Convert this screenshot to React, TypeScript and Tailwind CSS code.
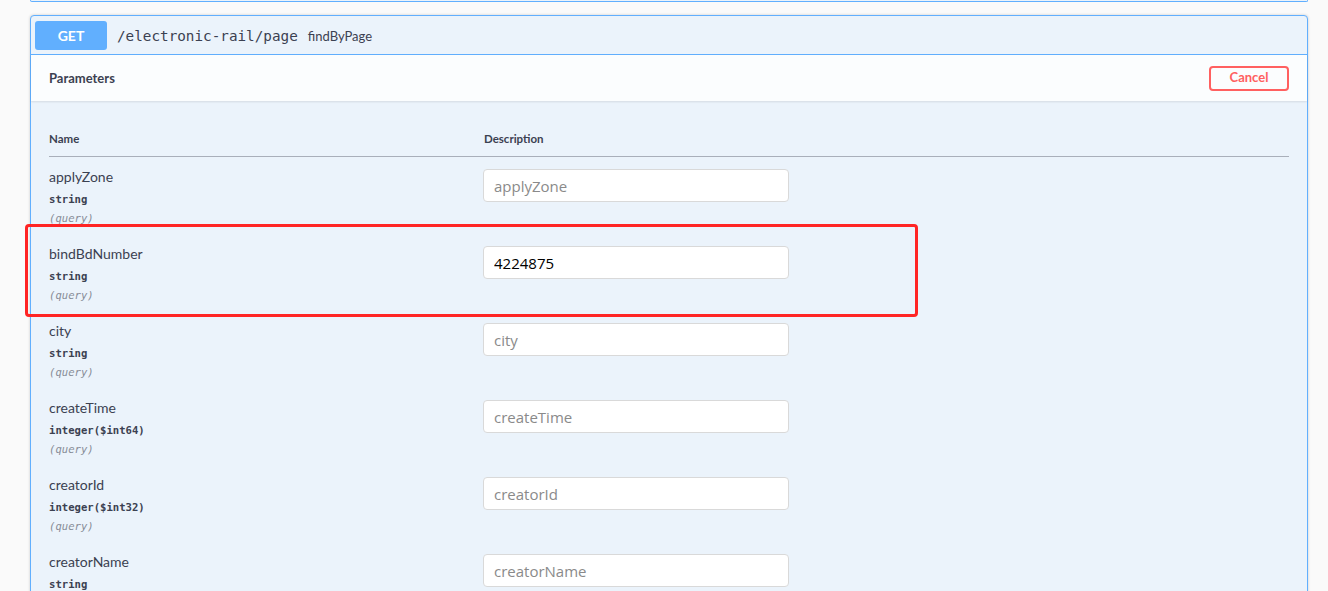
import React from "react";

type Param = { name: string; type: string; value?: string };

const params: Param[] = [
  { name: "applyZone", type: "string" },
  { name: "bindBdNumber", type: "string", value: "4224875" },
  { name: "city", type: "string" },
  { name: "createTime", type: "integer($int64)" },
  { name: "creatorId", type: "integer($int32)" },
  { name: "creatorName", type: "string" },
];

const MONO = "font-['DejaVu_Sans_Mono','Liberation_Mono',monospace]";
const SANS = "font-['Lato','Open_Sans',sans-serif]";

function ParamRow({ p }: { p: Param }) {
  return (
    <div className="flex h-[77px] pt-[10px]">
      <div className="w-[434px] shrink-0">
        <div className={`${SANS} text-[14px] leading-[20px] text-[#3b4151]`}>{p.name}</div>
        <div className={`${MONO} mt-[3px] text-[10.6px] font-bold leading-[18px] text-[#3b4151]`}>{p.type}</div>
        <div className={`${MONO} mt-[1px] text-[10.6px] italic leading-[18px] text-[#878c97]`}>(query)</div>
      </div>
      <div className="pt-[2px]">
        <input
          className="h-[33px] w-[306px] rounded-[4px] border border-[#d9d9d9] bg-white px-[10px] font-['Open_Sans',sans-serif] text-[15px] text-black outline-none placeholder:text-[#8a8a8a]"
          placeholder={p.name}
          defaultValue={p.value}
        />
      </div>
    </div>
  );
}

export default function App() {
  return (
    <div className="relative h-[591px] w-[1328px] overflow-hidden bg-[#fafafa]">
      <div className="ml-[30px] mr-[20px] h-[2px] rounded-b-[4px] border-x border-b border-[#61affe] bg-[#ebf3fb]" />

      <div className="ml-[30px] mr-[20px] mt-[13px] rounded-[4px] border border-[#61affe] bg-[#ebf3fb] shadow-[0_0_3px_rgba(0,0,0,0.19)]">
        {/* summary */}
        <div className="flex h-[39px] items-center border-b border-[#61affe] px-[4px]">
          <div className={`${SANS} flex h-[29px] w-[72px] items-center justify-center rounded-[3px] bg-[#61affe] text-[14px] font-bold text-white`}>
            GET
          </div>
          <span className={`${MONO} ml-[10px] pt-[4px] text-[14.3px] text-[#3b4151]`}>/electronic-rail/page</span>
          <span className={`${SANS} ml-[10px] pt-[4px] text-[13px] text-[#3b4151]`}>findByPage</span>
        </div>

        {/* parameters header */}
        <div className="flex h-[46px] items-center justify-between bg-[#fbfdfe] px-[18px] shadow-[0_1px_2px_rgba(0,0,0,0.1)]">
          <span className={`${SANS} pt-[1px] text-[13px] font-bold text-[#3b4151]`}>Parameters</span>
          <button className={`${SANS} h-[25px] w-[80px] rounded-[4px] border-2 border-[#ff6060] bg-transparent text-[13px] font-bold text-[#ff6060]`}>
            Cancel
          </button>
        </div>

        {/* table */}
        <div className="px-[18px] pt-[29px]">
          <div className={`${SANS} flex h-[27px] border-b border-[#a9afba] text-[11.5px] font-bold text-[#3b4151]`}>
            <div className="w-[435px] shrink-0">Name</div>
            <div>Description</div>
          </div>
          {params.map((p) => (
            <ParamRow key={p.name} p={p} />
          ))}
        </div>
      </div>

      {/* annotation */}
      <div className="absolute left-[25px] top-[224px] h-[93px] w-[893px] rounded-[4px] border-[3px] border-[#ff2424]" />
    </div>
  );
}
